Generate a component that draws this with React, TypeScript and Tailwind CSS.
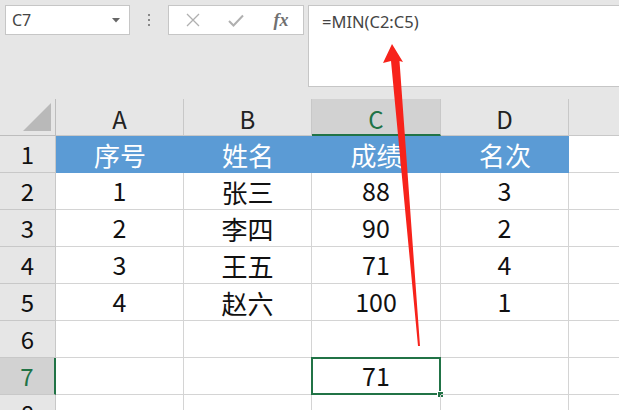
import React from 'react';

const cols = ['A', 'B', 'C', 'D'];

const rows: string[][] = [
    ['序号', '姓名', '成绩', '名次'],
    ['1', '张三', '88', '3'],
    ['2', '李四', '90', '2'],
    ['3', '王五', '71', '4'],
    ['4', '赵六', '100', '1'],
    ['', '', '', ''],
    ['', '', '71', ''],
    ['', '', '', ''],
];

const gridFont = { fontFamily: '"Noto Sans CJK SC", "Noto Sans", sans-serif' };

// CJK glyphs in the shot read a bit larger than the digits
const isCjk = (v: string) => /[\u4e00-\u9fff]/.test(v);

export default function App() {
    return (
        <div className="relative w-[619px] h-[410px] overflow-hidden bg-[#e6e6e6]" style={gridFont}>
            {/* formula bar */}
            <div className="flex h-[99px] items-start pt-[5px] pl-[5px]">
                <div className="w-[125px] h-[30px] bg-white border border-[#c6c6c6] flex items-center justify-between pl-[6px] pr-[9px]">
                    <span className="text-[16px] text-[#444]" style={{ fontFamily: '"Noto Sans", sans-serif' }}>C7</span>
                    <svg width="8" height="5" viewBox="0 0 8 5"><path d="M0 0 L8 0 L4 4.5 Z" fill="#666" /></svg>
                </div>
                <div className="w-[38px] h-[30px] flex flex-col items-center justify-center gap-[3px]">
                    <div className="w-[2px] h-[2px] bg-[#888]" />
                    <div className="w-[2px] h-[2px] bg-[#888]" />
                    <div className="w-[2px] h-[2px] bg-[#888]" />
                </div>
                <div className="w-[136px] h-[30px] bg-white border border-[#c6c6c6] flex items-center">
                    <div className="w-[44px] flex justify-center pl-[4px]">
                        <svg width="14" height="14" viewBox="0 0 14 14"><path d="M1 1 L13 13 M13 1 L1 13" stroke="#b0b0b0" strokeWidth="1.3" /></svg>
                    </div>
                    <div className="w-[46px] flex justify-center">
                        <svg width="16" height="13" viewBox="0 0 16 13"><path d="M1 7 L5.5 11.5 L15 1.5" stroke="#b0b0b0" strokeWidth="2" fill="none" /></svg>
                    </div>
                    <div className="flex-1 flex justify-center">
                        <span className="text-[18px] italic font-bold text-[#707070]" style={{ fontFamily: '"Liberation Serif", serif' }}>fx</span>
                    </div>
                </div>
                <div className="ml-[4px] flex-1 h-[82px] bg-white border border-[#c6c6c6] border-r-0 pl-[13px] pt-[3px]">
                    <span className="text-[16.5px] text-[#444]" style={{ fontFamily: '"Noto Sans", sans-serif' }}>=MIN(C2:C5)</span>
                </div>
            </div>

            {/* sheet */}
            <div className="grid grid-cols-[56px_128px_128px_129px_128px_1fr] auto-rows-[37px] bg-white">
                <div className="bg-[#e6e6e6] border-r border-b border-[#bdbdbd] flex items-end justify-end pr-[3px] pb-[3px]">
                    <svg width="29" height="29" viewBox="0 0 29 29"><path d="M28 0 L28 28 L0 28 Z" fill="#b9b9b9" /></svg>
                </div>
                {cols.map((c) =>
                    c === 'C' ? (
                        <div key={c} className="bg-[#d2d2d2] border-r border-[#c8c8c8] border-b-2 border-b-[#217346] flex items-center justify-center pt-[4px] text-[24px] text-[#217346]">
                            {c}
                        </div>
                    ) : (
                        <div key={c} className="bg-[#e6e6e6] border-r border-b border-[#c8c8c8] flex items-center justify-center pt-[4px] text-[24px] text-[#222]">
                            {c}
                        </div>
                    )
                )}
                <div className="bg-[#e6e6e6] border-b border-[#c8c8c8]" />

                {rows.map((row, r) => {
                    const n = r + 1;
                    return (
                        <React.Fragment key={n}>
                            {n === 7 ? (
                                <div className="bg-[#d2d2d2] border-r-2 border-r-[#217346] border-b border-b-[#c8c8c8] flex items-center justify-center text-[24px] text-[#217346]">
                                    {n}
                                </div>
                            ) : (
                                <div className="bg-[#e6e6e6] border-r border-b border-[#c8c8c8] flex items-center justify-center text-[24px] text-[#111]">
                                    {n}
                                </div>
                            )}
                            {row.map((v, i) =>
                                n === 1 ? (
                                    <div key={i} className="bg-[#5b9bd5] border-b border-[#5b9bd5] flex items-center justify-center text-[26px] text-white">
                                        {v}
                                    </div>
                                ) : (
                                    <div key={i} className={`relative border-r border-b border-[#d4d4d4] flex items-center justify-center text-[#111] ${isCjk(v) ? 'text-[26px]' : 'text-[25px]'}`}>
                                        {v}
                                        {n === 7 && i === 2 && (
                                            <>
                                                <div className="absolute -top-[1px] -left-[1px] -right-[1px] -bottom-[1px] border-2 border-[#217346]" />
                                                <div className="absolute -right-[4px] -bottom-[4px] w-[7px] h-[7px] bg-[#217346] border border-white" />
                                            </>
                                        )}
                                    </div>
                                )
                            )}
                            <div className="border-b border-[#d4d4d4]" />
                        </React.Fragment>
                    );
                })}
            </div>

            {/* red arrow */}
            <svg className="absolute inset-0 pointer-events-none" width="619" height="410" viewBox="0 0 619 410">
                <polygon points="392,44 403,62 399.5,61 420,346 418,346 391,61 383,63" fill="#f7231b" />
            </svg>
        </div>
    );
}
